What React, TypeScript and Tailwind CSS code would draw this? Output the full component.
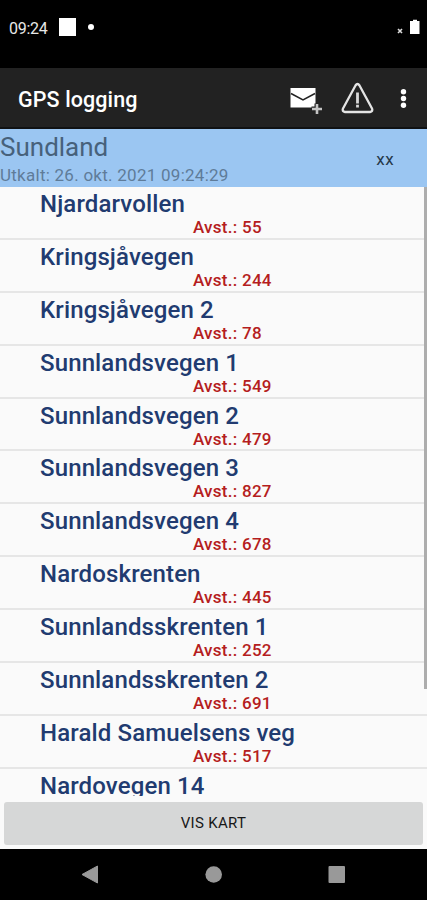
const stops: [string, number | null][] = [
  ["Njardarvollen", 55],
  ["Kringsjåvegen", 244],
  ["Kringsjåvegen 2", 78],
  ["Sunnlandsvegen 1", 549],
  ["Sunnlandsvegen 2", 479],
  ["Sunnlandsvegen 3", 827],
  ["Sunnlandsvegen 4", 678],
  ["Nardoskrenten", 445],
  ["Sunnlandsskrenten 1", 252],
  ["Sunnlandsskrenten 2", 691],
  ["Harald Samuelsens veg", 517],
  ["Nardovegen 14", null],
];

function StatusBar() {
  return (
    <div className="flex h-[68px] shrink-0 items-start bg-black pl-[9px] pr-[7px] pt-[18px] text-white">
      <span className="w-[50px] pt-px text-[16px] leading-[20px] tracking-[-0.3px] text-[#e8e8e8]">09:24</span>
      <div className="h-[18px] w-[17px] bg-white" />
      <div className="ml-[12px] mt-[6px] h-[6px] w-[6px] rounded-full bg-white" />
      <svg className="ml-auto" width="24" height="18" viewBox="0 0 24 18">
        <path d="M2 11l4 4m0-4l-4 4" stroke="#ddd" strokeWidth="1.6" />
        <path d="M15 3h2V1.800h4V3h2.500v13H14V3z" fill="#fff" />
      </svg>
    </div>
  );
}

function TitleBar() {
  return (
    <header className="flex h-[61px] shrink-0 items-center border-b-2 border-[#101214] bg-[#222] pl-[18px] pt-[3px]">
      <h1 className="pt-px text-[21.5px] font-medium leading-[26px] tracking-[0.1px] text-white">GPS logging</h1>
      <svg className="ml-auto" width="137" height="36" viewBox="290 81 137 36">
        <path d="M290.500 88h25v19.500h-25z" fill="#fff" />
        <path d="M291 93.500l12 6.500 12-6.500" fill="none" stroke="#222" strokeWidth="1.500" />
        <path d="M317 103.500v11M311.500 109h11" stroke="#222" strokeWidth="5" />
        <path d="M317 104v10M312 109h10" stroke="#c4c4c4" strokeWidth="2.600" />
        <path d="M355.500 85.500q2-3 4 0l12.500 23q1.200 3-2 3.500h-25q-3.200-.5-2-3.500z" fill="none" stroke="#e4e4e4" strokeWidth="2.300" strokeLinejoin="round" />
        <path d="M357.500 92.500v11M357.500 104.800v2.700" stroke="#d8d8d8" strokeWidth="2.800" />
        <g fill="#fff">
          <circle cx="403.500" cy="91.700" r="2.700" />
          <circle cx="403.500" cy="98.500" r="2.700" />
          <circle cx="403.500" cy="105.300" r="2.700" />
        </g>
      </svg>
    </header>
  );
}

export default function App() {
  return (
    <div className="flex h-[900px] w-[427px] flex-col overflow-hidden bg-[#fafafa] font-['Roboto',sans-serif]">
      <StatusBar />
      <TitleBar />
      <section className="flex h-[58px] shrink-0 items-center justify-between bg-[#9bc6f2] pr-[33px]">
        <div>
          <div className="pt-[3px] text-[26px] leading-[30px] text-[#47617b]">Sundland</div>
          <div className="pt-px text-[17px] leading-[24px] tracking-[0.26px] text-[#5f7c99]">Utkalt: 26. okt. 2021 09:24:29</div>
        </div>
        <span className="pt-[3px] text-[17px] tracking-[0.4px] text-[#26384a]">xx</span>
      </section>
      <main className="relative h-[609px] shrink-0 overflow-hidden">
        {stops.map(([name, distance]) => (
          <div key={name} className="h-[52.9px] border-b-2 border-[#e6e6e6]">
            <div className="pl-[40px] pt-[3px] text-[24px] font-medium leading-[28px] tracking-[0.13px] text-[#213b70]">{name}</div>
            {distance !== null && (
              <div className="-mt-px pl-[193px] text-[17px] font-medium leading-[20px] tracking-[0.26px] text-[#b51d20]">Avst.: {distance}</div>
            )}
          </div>
        ))}
        <div className="absolute right-0 top-0 h-[502px] w-[3px] bg-[#adadad]" />
      </main>
      <div className="flex h-[53px] shrink-0 px-[4px] pb-[4px] pt-[6px]">
        <button className="w-full rounded-[3px] bg-[#d6d7d7] text-[15px] tracking-[0.3px] text-[#181818]">VIS KART</button>
      </div>
      <nav className="h-[51px] shrink-0 bg-black">
        <svg width="427" height="51" viewBox="0 849 427 51" fill="#999">
          <path d="M82 874.500l15.500-8.500v17z" stroke="#999" strokeLinejoin="round" />
          <circle cx="213.700" cy="874.500" r="8.300" />
          <rect x="328.500" y="866" width="16.500" height="17" rx="1" />
        </svg>
      </nav>
    </div>
  );
}
